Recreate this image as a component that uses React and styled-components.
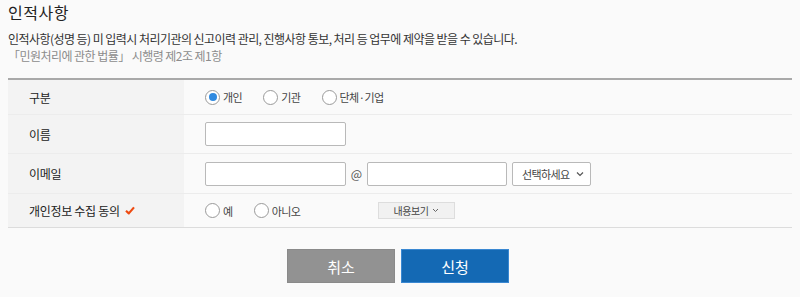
import styled, { createGlobalStyle } from "styled-components";
import { useState } from "react";

const GlobalStyle = createGlobalStyle`
    html, body {
        margin: 0;
        padding: 0;
        background-color: #fafafa;
    }
    body {
        font-family: "Noto Sans CJK KR", "Noto Sans", sans-serif;
        color: #333333;
    }
    * {
        box-sizing: border-box;
    }
`

export default function App() {
    const [type, setType] = useState("person");
    const [agree, setAgree] = useState(null);

    return (
        <Page>
            <GlobalStyle />
            <Title>인적사항</Title>
            <Desc>
                <p>인적사항(성명 등) 미 입력시 처리기관의 신고이력 관리, 진행사항 통보, 처리 등 업무에 제약을 받을 수 있습니다.</p>
                <Law>「민원처리에 관한 법률」 시행령 제2조 제1항</Law>
            </Desc>

            <Table>
                <Row height={35}>
                    <Label>구분</Label>
                    <Value>
                        <RadioGroup>
                            <Radio label="개인" checked={type === "person"} onClick={() => setType("person")} />
                            <Radio label="기관" checked={type === "org"} onClick={() => setType("org")} />
                            <Radio label="단체·기업" checked={type === "group"} onClick={() => setType("group")} />
                        </RadioGroup>
                    </Value>
                </Row>
                <Row height={39}>
                    <Label>이름</Label>
                    <Value>
                        <Input width={141} />
                    </Value>
                </Row>
                <Row height={40}>
                    <Label>이메일</Label>
                    <Value>
                        <Input width={141} />
                        <At>@</At>
                        <Input width={140} />
                        <SelectBox>
                            <span>선택하세요</span>
                            <svg width="8" height="6" viewBox="0 0 8 6">
                                <path d="M1 1.5 L4 4.5 L7 1.5" fill="none" stroke="#555" strokeWidth="1.2" />
                            </svg>
                        </SelectBox>
                    </Value>
                </Row>
                <Row height={34} last>
                    <Label>
                        개인정보 수집 동의
                        <Check width="10" height="9" viewBox="0 0 10 9">
                            <path d="M1 4.8 L3.8 7.4 L9 1.4" fill="none" stroke="#ee4a10" strokeWidth="2.2" strokeLinejoin="round" />
                        </Check>
                    </Label>
                    <Value>
                        <RadioGroup>
                            <Radio label="예" checked={agree === "yes"} onClick={() => setAgree("yes")} />
                            <Radio label="아니오" checked={agree === "no"} onClick={() => setAgree("no")} />
                        </RadioGroup>
                        <ViewButton>
                            내용보기
                            <svg width="7" height="5" viewBox="0 0 7 5">
                                <path d="M1 1 L3.5 3.5 L6 1" fill="none" stroke="#666" strokeWidth="1" />
                            </svg>
                        </ViewButton>
                    </Value>
                </Row>
            </Table>

            <Buttons>
                <Button color="#929292" border="#8a8a8a">취소</Button>
                <Button color="#1469b4" border="#3a88d2">신청</Button>
            </Buttons>
        </Page>
    )
}

function Radio(props) {
    const { label, checked, onClick } = props;

    return (
        <RadioItem onClick={onClick}>
            <Circle checked={checked} />
            <span>{label}</span>
        </RadioItem>
    )
}

const Page = styled.div`
    width: 100%;
    padding: 2px 8px 0 8px;
`

const Title = styled.h2`
    margin: 0;
    font-size: 16px;
    line-height: 20px;
    font-weight: 400;
    color: #222222;
    letter-spacing: 0.5px;
`

const Desc = styled.div`
    margin-top: 8px;
    font-size: 12px;
    line-height: 17px;
    letter-spacing: -0.55px;

    p {
        margin: 0;
        color: #333333;
    }
`

const Law = styled.p`
    && {
        color: #8c8c8c;
    }
`

const Table = styled.div`
    margin-top: 14px;
    border-top: 2px solid #a9a9a9;
    display: flex;
    flex-direction: column;
`

const Row = styled.div`
    display: flex;
    height: ${({ height }) => height}px;
    border-bottom: 1px solid ${({ last }) => (last ? "#dcdcdc" : "#ececec")};
`

const Label = styled.div`
    width: 176px;
    flex-shrink: 0;
    display: flex;
    align-items: center;
    padding-left: 21px;
    background-color: #f3f3f3;
    font-size: 12px;
    letter-spacing: -0.3px;
    color: #222222;
`

const Check = styled.svg`
    margin-left: 5px;
`

const Value = styled.div`
    flex: 1;
    display: flex;
    align-items: center;
    padding-left: 21px;
    background-color: #fafafa;
`

const RadioGroup = styled.div`
    display: flex;
    align-items: center;
    gap: 21px;
`

const RadioItem = styled.label`
    display: flex;
    align-items: center;
    gap: 3px;
    font-size: 11px;
    letter-spacing: -0.5px;
    color: #444444;
    cursor: pointer;
`

const Circle = styled.span`
    width: 15px;
    height: 15px;
    border-radius: 50%;
    border: 1px solid #9a9a9a;
    background-color: #ffffff;
    display: flex;
    align-items: center;
    justify-content: center;

    &::after {
        content: "";
        width: 8px;
        height: 8px;
        border-radius: 50%;
        background-color: ${({ checked }) => (checked ? "#2f8ae0" : "transparent")};
    }
`

const Input = styled.input`
    width: ${({ width }) => width}px;
    height: 24px;
    border: 1px solid #b9b9b9;
    border-radius: 2px;
    background-color: #ffffff;
    outline: none;
`

const At = styled.span`
    width: 21px;
    text-align: center;
    font-size: 12px;
    color: #555555;
`

const SelectBox = styled.div`
    width: 79px;
    height: 24px;
    margin-left: 5px;
    border: 1px solid #b9b9b9;
    border-radius: 2px;
    background-color: #ffffff;
    display: flex;
    align-items: center;
    justify-content: space-between;
    padding: 0 6px 0 9px;
    font-size: 11px;
    letter-spacing: -0.6px;
    color: #444444;
`

const ViewButton = styled.div`
    width: 77px;
    height: 17px;
    margin-left: 77px;
    border: 1px solid #dddddd;
    background-color: #f1f1f1;
    display: flex;
    align-items: center;
    justify-content: center;
    gap: 3px;
    font-size: 10px;
    letter-spacing: -0.4px;
    color: #444444;
`

const Buttons = styled.div`
    display: flex;
    justify-content: center;
    gap: 6px;
    margin-top: 21px;
    margin-right: 4px;
`

const Button = styled.div`
    width: 108px;
    height: 34px;
    display: flex;
    align-items: center;
    justify-content: center;
    background-color: ${({ color }) => color};
    border: 1px solid ${({ border }) => border};
    color: #ffffff;
    font-size: 15px;
`
